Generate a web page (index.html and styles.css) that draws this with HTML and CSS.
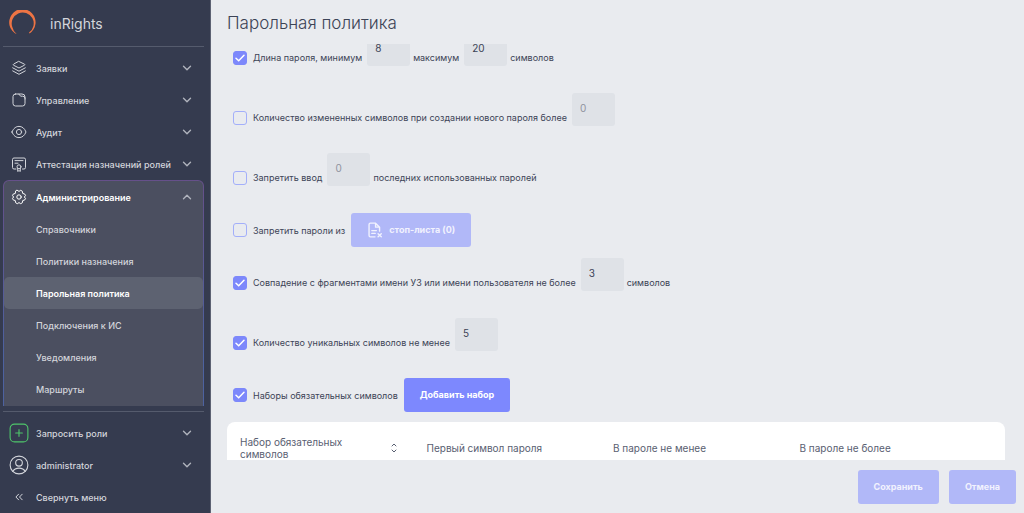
FILE: index.html
```html
<!DOCTYPE html>
<html lang="ru">
<head>
<meta charset="utf-8">
<title>Парольная политика</title>
<meta name="viewport" content="width=device-width, initial-scale=1">
<link rel="stylesheet" href="styles.css">
</head>
<body>
<svg width="0" height="0" class="defs" aria-hidden="true">
  <symbol id="down" viewBox="0 0 10 10"><path d="M1.500 3.200 5 6.700l3.500-3.500"/></symbol>
  <symbol id="up" viewBox="0 0 10 10"><path d="M1.500 6.700 5 3.200l3.500 3.500"/></symbol>
</svg>
<div class="app">
  <aside class="sidebar">
    <div class="brand">
      <svg class="logo" viewBox="0 0 28 26" aria-hidden="true"><path d="M7.800 24.300A13.200 13.200 0 1 1 20.600 23.400L20 22.500A11 11 0 1 0 3.300 17A13 13 0 0 0 7.800 24.300Z"/></svg>
      <span class="brand-name">inRights</span>
    </div>
    <nav class="menu">
      <button class="item" type="button">
        <svg class="icon" viewBox="0 0 16 16"><path d="M8 1.500 13.500 4.200a.6.6 0 0 1 0 1L8 8 2.500 5.200a.6.6 0 0 1 0-1ZM1.700 7.800 8 11.200l6.300-3.400M1.700 10.900 8 14.300l6.300-3.400"/></svg>
        <span class="label">Заявки</span><svg class="chev"><use href="#down"/></svg>
      </button>
      <button class="item" type="button">
        <svg class="icon" viewBox="0 0 16 16"><path d="M4.500 2h3.300l1.800 2.200h2.100A2.300 2.300 0 0 1 14 6.500v5A2.500 2.500 0 0 1 11.500 14h-7A2.500 2.500 0 0 1 2 11.500v-7A2.500 2.500 0 0 1 4.500 2ZM7.800 2H11a3 3 0 0 1 3 3v2"/></svg>
        <span class="label">Управление</span><svg class="chev"><use href="#down"/></svg>
      </button>
      <button class="item" type="button">
        <svg class="icon" viewBox="0 0 16 16"><path d="M1 8C2.500 4.200 5 2.400 8 2.400S13.500 4.200 15 8c-1.500 3.800-4 5.600-7 5.600S2.500 11.800 1 8Z"/><circle cx="8" cy="8" r="2.600"/></svg>
        <span class="label">Аудит</span><svg class="chev"><use href="#down"/></svg>
      </button>
      <button class="item" type="button">
        <svg class="icon" viewBox="0 0 16 16"><path d="M5 13H3a1.500 1.500 0 0 1-1.500-1.500v-8A1.500 1.500 0 0 1 3 2h10a1.500 1.500 0 0 1 1.500 1.500v8A1.500 1.500 0 0 1 13 13h-1.500M4 4.600h8M4 7.200h3M6.700 12.500V15.500l1.300-1 1.300 1v-3"/><circle cx="8" cy="10.800" r="2"/></svg>
        <span class="label">Аттестация назначений ролей</span><svg class="chev"><use href="#down"/></svg>
      </button>
      <div class="group">
        <button class="item open" type="button">
          <svg class="icon" viewBox="0 0 16 16"><path d="M6.300 1.300 8 2.400l1.700-1.100 1.700 1 .3 2.100 2.100.7.700 1.600L13.300 8l1.200 1.300-.7 1.600-2.100.7-.3 2.100-1.700 1L8 13.600l-1.700 1.100-1.700-1-.3-2.100-2.100-.7-.7-1.600L2.700 8 1.500 6.700l.7-1.600 2.100-.7.3-2.100Z"/><circle cx="8" cy="8" r="2.200"/></svg>
          <span class="label">Администрирование</span><svg class="chev"><use href="#up"/></svg>
        </button>
        <a class="sub" href="#">Справочники</a>
        <a class="sub" href="#">Политики назначения</a>
        <a class="sub active" href="#" aria-current="page">Парольная политика</a>
        <a class="sub" href="#">Подключения к ИС</a>
        <a class="sub" href="#">Уведомления</a>
        <a class="sub" href="#">Маршруты</a>
      </div>
    </nav>
    <div class="bottom">
      <button class="item" type="button">
        <svg class="icon big plus" viewBox="0 0 18 18"><rect x="1" y="1" width="16" height="16" rx="4"/><path d="M9 6v6M6 9h6"/></svg>
        <span class="label">Запросить роли</span><svg class="chev"><use href="#down"/></svg>
      </button>
      <button class="item" type="button">
        <svg class="icon big" viewBox="0 0 18 18"><circle cx="9" cy="9" r="8"/><circle cx="9" cy="7" r="3"/><path d="M3.400 14.800c1.200-2.200 3.200-3 5.600-3s4.400.8 5.600 3"/></svg>
        <span class="label">administrator</span><svg class="chev"><use href="#down"/></svg>
      </button>
      <button class="item" type="button">
        <svg class="icon" viewBox="0 0 16 16"><path d="M7.600 5.200 4.900 8l2.700 2.800M11.200 5.200 8.500 8l2.700 2.800"/></svg>
        <span class="label">Свернуть меню</span>
      </button>
    </div>
  </aside>

  <main class="page">
    <h1 class="title">Парольная политика</h1>
    <div class="scroll">
      <form class="rules" id="policy">
        <div class="rule">
          <input class="check" type="checkbox" id="r1" checked>
          <label for="r1">Длина пароля, минимум</label>
          <input class="field" type="text" value="8" aria-label="Минимум символов">
          <label for="max">максимум</label>
          <input class="field" type="text" id="max" value="20">
          <span>символов</span>
        </div>
        <div class="rule">
          <input class="check" type="checkbox" id="r2">
          <label for="r2">Количество измененных символов при создании нового пароля более</label>
          <input class="field" type="text" value="0" disabled aria-label="Количество измененных символов">
        </div>
        <div class="rule">
          <input class="check" type="checkbox" id="r3">
          <label for="r3">Запретить ввод</label>
          <input class="field" type="text" value="0" disabled aria-label="Количество последних паролей">
          <span>последних использованных паролей</span>
        </div>
        <div class="rule">
          <input class="check" type="checkbox" id="r4">
          <label for="r4">Запретить пароли из</label>
          <button class="btn" type="button" disabled>
            <svg class="doc" viewBox="0 0 14 14"><path d="M7 13H3a1.200 1.200 0 0 1-1.200-1.200V2.200A1.200 1.200 0 0 1 3 1h4.500L11 4.500V8M7.500 1v3.500H11M4.200 7.500h4M4.200 10h3M9.700 10.200l2.800 2.800M12.500 10.200 9.700 13"/></svg>
            стоп-листа (0)
          </button>
        </div>
        <div class="rule">
          <input class="check" type="checkbox" id="r5" checked>
          <label for="r5">Совпадение с фрагментами имени УЗ или имени пользователя не более</label>
          <input class="field" type="text" value="3" aria-label="Длина совпадения">
          <span>символов</span>
        </div>
        <div class="rule">
          <input class="check" type="checkbox" id="r6" checked>
          <label for="r6">Количество уникальных символов не менее</label>
          <input class="field" type="text" value="5" aria-label="Количество уникальных символов">
        </div>
        <div class="rule">
          <input class="check" type="checkbox" id="r7" checked>
          <label for="r7">Наборы обязательных символов</label>
          <button class="btn" type="button">Добавить набор</button>
        </div>
      </form>
      <table class="sets">
        <thead>
          <tr>
            <th><div class="sortable">Набор обязательных символов<svg class="sort" viewBox="0 0 8 12"><path d="M2 4 4 2l2 2M2 8l2 2 2-2"/></svg></div></th>
            <th>Первый символ пароля</th>
            <th>В пароле не менее</th>
            <th>В пароле не более</th>
            <td class="actions"></td>
          </tr>
        </thead>
      </table>
    </div>
    <footer class="footer">
      <button class="btn" type="submit" form="policy" disabled>Сохранить</button>
      <button class="btn" type="button" disabled>Отмена</button>
    </footer>
  </main>
</div>
</body>
</html>
```
FILE: styles.css
```css
* { box-sizing: border-box; }
body { margin: 0; font-family: Inter, "Liberation Sans", sans-serif; font-size: 9px; color: #3c4356; }
button, input { font: inherit; color: inherit; }
.defs { position: absolute; }
svg { fill: none; stroke: currentColor; stroke-linecap: round; stroke-linejoin: round; flex: none; }

.app { display: flex; height: 100vh; background: #e9ebef; }

.sidebar { display: flex; flex-direction: column; flex: none; width: 211px; padding: 0 6px 0 3px; background: #353b4f; color: #d3d5db; border-right: 1px solid #5d6273; }
.brand { display: flex; align-items: center; gap: 13px; flex: none; height: 47px; padding-left: 6px; border-bottom: 1px solid #555b6d; }
.logo { width: 28px; height: 26px; }
.logo path { fill: #ee7444; stroke: none; }
.brand-name { font-size: 14px; }
.menu { flex: 1; min-height: 0; padding-top: 5px; overflow: hidden; }
.item { display: flex; align-items: center; width: 100%; height: 32px; padding: 0 12px 0 6px; border: 0; background: none; font-weight: 500; text-align: left; cursor: pointer; }
.icon { width: 16px; height: 16px; margin: 0 9px 0 2px; }
.icon.big { width: 20px; height: 20px; margin: 0 7px 0 0; }
.plus { color: #4fc66b; }
.label { flex: 1; white-space: nowrap; }
.chev { width: 10px; height: 10px; stroke-width: 1.400; color: #b0b3bd; }
.group { border: 1px solid transparent; border-radius: 6px; background: linear-gradient(#4b4f60, #4b4f60) padding-box, linear-gradient(#66508a, #4d62a0 60%) border-box; padding-bottom: 64px; }
.open { padding: 0 11px 0 5px; color: #fff; font-weight: 600; }
.sub { display: flex; align-items: center; height: 32px; padding-left: 32px; border-radius: 5px; color: #d3d5db; font-weight: 500; text-decoration: none; }
.sub.active { background: #5d6271; color: #fff; font-weight: 600; }
.bottom { flex: none; margin-top: 5px; padding-top: 5px; border-top: 1px solid #555b6d; }

.page { display: flex; flex-direction: column; flex: 1; min-width: 0; }
.title { flex: none; height: 44px; margin: 0; padding: 11px 16px 0; font-size: 17px; line-height: 24px; font-weight: 300; }
.scroll { flex: 1; min-height: 0; padding: 0 19px 0 16px; overflow: hidden; }
.rules { display: flex; flex-direction: column; gap: 11px; margin-top: -11px; padding-left: 6px; }
.rule { display: flex; align-items: center; white-space: nowrap; }
.check { appearance: none; flex: none; width: 14px; height: 14px; margin: 0 6px 0 0; border: 1px solid #a3affa; border-radius: 3px; }
.check:checked { border-color: #7d88fb; background: #7d88fb url("data:image/svg+xml,%3Csvg xmlns='http://www.w3.org/2000/svg' viewBox='0 0 12 12' fill='none' stroke='white' stroke-width='1.500' stroke-linecap='round'%3E%3Cpath d='M2 6.200 4.700 8.800 10 3.300'/%3E%3C/svg%3E"); }
.field { width: 43px; height: 33px; margin: 0 3px 16px 5px; padding: 0 8px 3px; border: 0; border-radius: 3px; background: #dfe2e7; font-size: 10px; }
.field:disabled { color: #8f939e; }
.btn { display: flex; align-items: center; gap: 6px; height: 34px; padding: 0 16px 1px; border: 0; border-radius: 3px; background: #7d88fe; color: #fff; font-weight: 700; white-space: nowrap; }
.btn:disabled { background: #b1b8f8; color: #f1f2fe; }
.rule .btn { margin-left: 6px; }
.doc { width: 16px; height: 16px; stroke-width: 1.200; }

.sets { width: 100%; margin-top: 10px; border-radius: 8px; background: #fff; border-spacing: 0; table-layout: fixed; }
.sets th { height: 52px; padding: 0 13px; font-size: 10px; line-height: 12px; font-weight: 400; text-align: left; color: #596071; }
.sets .actions { width: 32px; padding: 0; }
.sortable { display: flex; align-items: center; justify-content: space-between; gap: 24px; padding-right: 3px; }
.sort { width: 8px; height: 12px; }
.footer { display: flex; justify-content: flex-end; flex: none; gap: 10px; height: 53px; padding: 10px 8px; }
```
